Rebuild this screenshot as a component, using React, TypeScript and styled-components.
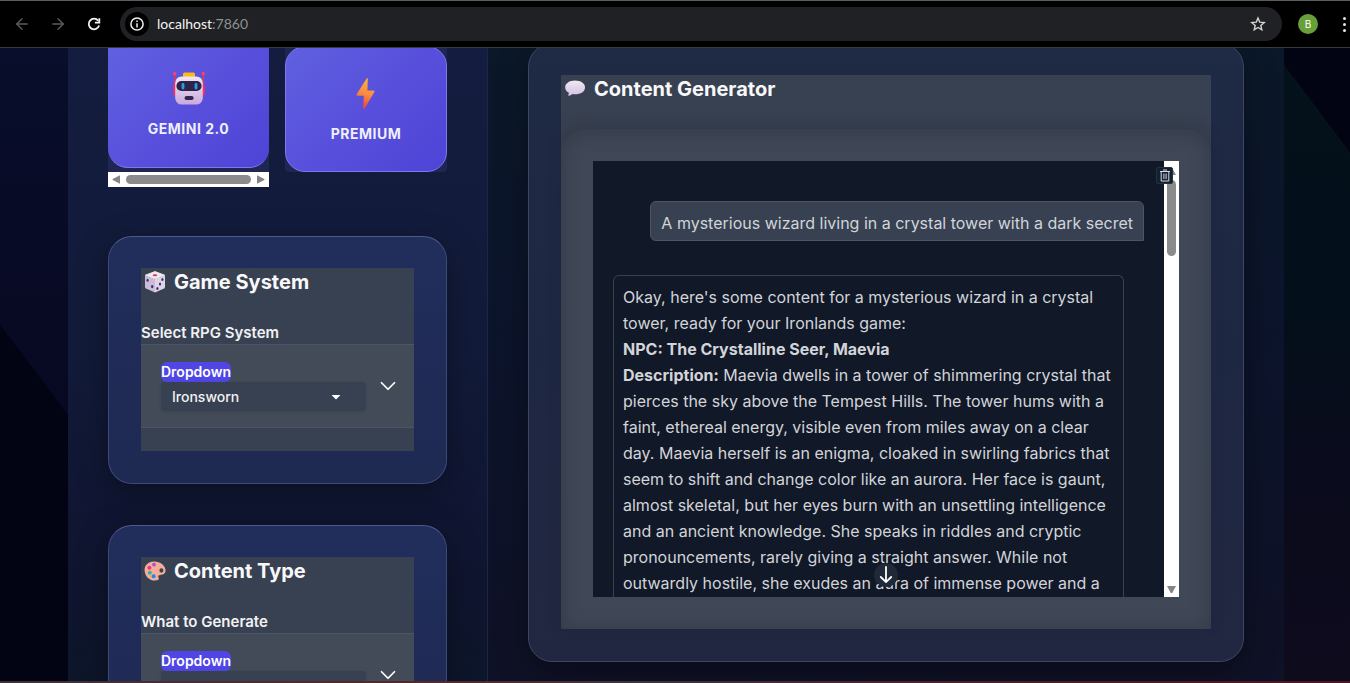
import React from 'react';
import styled, { createGlobalStyle } from 'styled-components';
import { ArrowLeft, ArrowRight, ChevronDown } from 'lucide-react';

const GlobalStyle = createGlobalStyle`
  *, *::before, *::after { box-sizing: border-box; }
  body {
    margin: 0;
    background: #020414;
    color: #f1f1f4;
    font-family: Inter, "Liberation Sans", sans-serif;
  }
  button, input, select { font: inherit; color: inherit; }
  h2, p { margin: 0; }
`;

const Window = styled.div`
  display: flex;
  flex-direction: column;
  height: 100vh;
  overflow: hidden;
`;

/* ---------- browser chrome ---------- */

const Toolbar = styled.header`
  flex: none;
  display: flex;
  align-items: center;
  height: 48px;
  padding: 0 0 0 12px;
  background: #000;
  border-top: 1px solid #5a5d5b;
  border-bottom: 1px solid #3a3a3c;
`;

const NavButton = styled.button<{ $dim?: boolean }>`
  display: flex;
  align-items: center;
  justify-content: center;
  width: 20px;
  height: 20px;
  margin-right: 16px;
  padding: 0;
  border: 0;
  background: none;
  color: ${(p) => (p.$dim ? '#5c5c5c' : '#f2f2f2')};
`;

const AddressBar = styled.div`
  flex: 1;
  display: flex;
  align-items: center;
  height: 34px;
  padding: 0 16px 0 5px;
  border-radius: 17px;
  background: #202124;
`;

const SiteInfo = styled.button`
  display: flex;
  align-items: center;
  justify-content: center;
  width: 24px;
  height: 24px;
  margin-right: 8px;
  padding: 0;
  border: 0;
  border-radius: 50%;
  background: #000;
`;

const Url = styled.a`
  flex: 1;
  font-family: Lato, "Open Sans", sans-serif;
  font-size: 14px;
  line-height: 20px;
  color: #f4f4f4;
  text-decoration: none;
`;

const Port = styled.span`
  color: #8d9095;
`;

const StarButton = styled.button`
  display: flex;
  padding: 0;
  border: 0;
  background: none;
  color: #d4d4d4;
`;

const Avatar = styled.button`
  width: 20px;
  height: 20px;
  margin: 0 20px 0 16px;
  padding: 0;
  border: 0;
  border-radius: 50%;
  background: #689f38;
  color: #fff;
  font-size: 10px;
  line-height: 20px;
`;

const MenuButton = styled.button`
  display: flex;
  flex-direction: column;
  align-items: center;
  gap: 3px;
  width: 12px;
  padding: 0;
  border: 0;
  background: none;

  i {
    width: 3px;
    height: 3px;
    border-radius: 50%;
    background: #e6e6e6;
  }
`;

/* ---------- page ---------- */

const Page = styled.div`
  flex: 1;
  min-height: 0;
  overflow: hidden;
  padding: 0 66px 0 68px;
  border-bottom: 2px solid;
  border-image: linear-gradient(90deg, #3a3238, #54282a 30%, #3c3236 48%, #4a2029 70%, #4d1420) 1;
  background:
    linear-gradient(53deg, #020414 14.7%, transparent 14.7%, transparent 95.7%, #020414 95.7%),
    linear-gradient(180deg, #04121b, #030f1b 40%, #0a0b1c 68%, #0e0b1d) right / 50% 100% no-repeat,
    linear-gradient(180deg, #080e2b, #080a24 40%, #060821 80%);
`;

const Shell = styled.div`
  display: grid;
  grid-template-columns: 420px minmax(0, 1fr);
  height: 100%;
`;

const Sidebar = styled.aside`
  padding: 0 40px;
  border-right: 1px solid #1c2747;
  background: linear-gradient(180deg, #141d3f, #111a38 50%, #101531 80%, #0d162a);
  overflow: hidden;
`;

const Main = styled.main`
  padding: 0 40px;
  background: linear-gradient(180deg, #0b1829, #0c142b 45%, #0f1126);
  overflow: hidden;
`;

const ModelRow = styled.div`
  display: grid;
  grid-template-columns: 161fr 162fr;
  column-gap: 16px;
  align-items: start;
  height: 139px;
  margin-bottom: 49px;
`;

const ModelSlot = styled.div`
  background: #1f2654;
  border-radius: 0 0 4px 4px;
`;

const ModelButton = styled.button<{ $tall?: boolean }>`
  display: flex;
  flex-direction: column;
  align-items: center;
  width: 100%;
  height: ${(p) => (p.$tall ? 126 : 120)}px;
  margin-top: ${(p) => (p.$tall ? -2 : 0)}px;
  padding: ${(p) => (p.$tall ? 28 : 22)}px 0 0;
  border: solid #7d78ee;
  border-width: ${(p) => (p.$tall ? '1px' : '0 0 1px')};
  border-radius: ${(p) => (p.$tall ? '20px' : '0 0 20px 20px')};
  background: linear-gradient(135deg, #6060e0, #5850dc 50%, #4e43d6);
  color: #efeffc;
  font-size: 14px;
  font-weight: 700;
  line-height: 20px;
  letter-spacing: 0.5px;

  svg { margin-bottom: 13px; }
`;

const HBar = styled.div`
  display: flex;
  align-items: center;
  gap: 5px;
  height: 15px;
  margin-top: 4px;
  padding: 0 4px;
  background: #fff;

  i {
    flex: 1;
    height: 9px;
    border-radius: 5px;
    background: #8b8b8b;
  }
`;

const HSlot = styled.div`
  background: #1f2654;
`;

const Card = styled.section`
  padding: 31px 32px 32px;
  border: 1px solid #3d4978;
  border-top-color: #4d5b88;
  border-radius: 24px;
  background: linear-gradient(180deg, #212d5b, #1e2a52);
  box-shadow: 0 8px 32px rgba(0, 0, 0, 0.35);
  margin-bottom: 41px;
`;

const MainCard = styled(Card)`
  margin: -5px 0 0;
  border-color: #3b4566;
  background: linear-gradient(180deg, #1f2a45, #1e2742 50%, #222741);
`;

const Panel = styled.div`
  background: #384151;
`;

const PanelTitle = styled.h2`
  display: flex;
  align-items: center;
  gap: 8px;
  padding-left: 3px;
  color: #f8f8fa;
  font-size: 20px;
  font-weight: 700;
  line-height: 28px;

  svg { flex: none; }
`;

const FieldTitle = styled.p`
  margin-top: 26px;
  font-size: 15px;
  font-weight: 600;
  line-height: 22px;
`;

const Field = styled.div`
  display: flex;
  align-items: center;
  justify-content: space-between;
  height: 84px;
  padding: 0 13px 0 20px;
  border: solid #4c5563;
  border-width: 1px 0;
  background: #434b59;
`;

const FieldBody = styled.div`
  display: flex;
  flex-direction: column;
  align-items: flex-start;
  width: 205px;
`;

const Badge = styled.label`
  border-radius: 6px;
  background: #4f46e5;
  color: #fff;
  font-size: 14px;
  font-weight: 600;
  line-height: 20px;
`;

const SelectWrap = styled.div`
  position: relative;
  width: 100%;

  svg {
    position: absolute;
    top: 13px;
    right: 25px;
    pointer-events: none;
  }
`;

const Select = styled.select`
  display: block;
  appearance: none;
  width: 100%;
  height: 29px;
  padding: 0 11px;
  border: 0;
  border-radius: 4px;
  background: #374151;
  box-shadow: 0 1px 3px rgba(0, 0, 0, 0.12);
  font-size: 14px;
  font-weight: 500;
`;

const Toggle = styled.button`
  display: flex;
  padding: 0;
  border: 0;
  background: none;
  color: #fff;
`;

const PanelEnd = styled.div`
  height: 23px;
`;

const ChatFrame = styled.div`
  margin-top: 26px;
  padding: 32px;
  border-radius: 24px 24px 0 0;
  background: #404857;
  box-shadow: inset 0 2px 20px rgba(20, 28, 36, 0.32), 0 -4px 14px rgba(30, 34, 44, 0.22);
`;

const ChatBox = styled.div`
  position: relative;
  display: flex;
  height: 436px;
  overflow: hidden;
  background: #111827;
`;

const ChatLog = styled.div`
  flex: 1;
  display: flex;
  flex-direction: column;
  padding: 40px 20px 0;
  color: #d2d4d9;
  font-size: 16px;
  line-height: 26px;
`;

const UserBubble = styled.p`
  align-self: flex-end;
  height: 40px;
  margin-bottom: 34px;
  padding: 8px 10px 0;
  border: 1px solid #4b5563;
  border-radius: 6px 6px 0 6px;
  background: #374151;
`;

const BotBubble = styled.div`
  flex: 1;
  margin-right: 20px;
  padding: 8px 9px 0;
  border: 1px solid #374151;
  border-bottom: 0;
  border-radius: 6px 6px 0 0;

  b { font-weight: 700; }
`;

const VBar = styled.div`
  display: flex;
  flex-direction: column;
  align-items: center;
  width: 15px;
  padding: 6px 0 3px;
  background: #fff;

  i {
    width: 9px;
    height: 76px;
    margin: 4px 0 auto;
    border-radius: 5px;
    background: #8b8b8b;
  }
`;

const ClearButton = styled.button`
  position: absolute;
  top: 6px;
  right: 6px;
  display: flex;
  align-items: center;
  justify-content: center;
  width: 17px;
  height: 17px;
  padding: 0;
  border: 1px solid #1f3344;
  border-radius: 2px;
  background: #14202f;
`;

const ScrollDown = styled.button`
  position: absolute;
  left: 50%;
  bottom: 10px;
  display: flex;
  align-items: center;
  justify-content: center;
  width: 24px;
  height: 24px;
  margin-left: -12px;
  padding: 0;
  border: 0;
  border-radius: 50%;
  background: #1f2937;
  color: #fff;
`;

/* ---------- drawings ---------- */

const ReloadIcon = () => (
  <svg width="14" height="14" viewBox="0 0 14 14" fill="none" stroke="currentColor" strokeWidth="1.8">
    <path d="M12.1 8.6A5.3 5.3 0 1 1 11.2 3.7" />
    <path d="M12.3 1.2V5.6H7.9" />
  </svg>
);

const StarIcon = () => (
  <svg width="16" height="16" viewBox="0 0 16 16" fill="none" stroke="currentColor" strokeWidth="1.4">
    <path d="M8 2L9.7 6.1 14.2 6.5 10.8 9.4 11.8 13.8 8 11.5 4.2 13.8 5.2 9.4 1.8 6.5 6.3 6.1Z" />
  </svg>
);

const InfoIcon = () => (
  <svg width="14" height="14" viewBox="0 0 14 14" fill="none" stroke="#f0f0f0" strokeWidth="1.5">
    <circle cx="7" cy="7" r="6.1" />
    <path d="M7 6.2V10.4M7 3.4V5" />
  </svg>
);

const TrashIcon = () => (
  <svg width="12" height="13" viewBox="0 0 12 13" fill="none" stroke="#d8dbe0" strokeWidth="1">
    <path d="M1 2.5H11M4 1H8M2.2 2.5V12H9.8V2.5M4.9 4.6V10M7.1 4.6V10" />
  </svg>
);

const DownIcon = () => (
  <svg width="14" height="18" viewBox="0 0 14 18" fill="none" stroke="currentColor" strokeWidth="1.8">
    <path d="M7 1V16M1.8 11L7 16.2 12.2 11" strokeLinecap="round" strokeLinejoin="round" />
  </svg>
);

const Triangle = ({ dir, color = '#858585' }: { dir: 'left' | 'right' | 'up' | 'down'; color?: string }) => {
  const shapes = {
    left: 'M8 0.3V8.7L0.6 5V4Z',
    right: 'M1 0.3V8.7L8.4 5V4Z',
    up: 'M0 8H9L5.2 1H3.8Z',
    down: 'M0 1H9L5.2 8H3.8Z',
  };
  return (
    <svg width="9" height="9" viewBox="0 0 9 9" fill={color}>
      <path d={shapes[dir]} />
    </svg>
  );
};

const Caret = () => (
  <svg width="10" height="5" viewBox="0 0 10 5" fill="#fff">
    <path d="M0.5 0H9.5L5 4.6Z" />
  </svg>
);

const Robot = () => (
  <svg width="34" height="36" viewBox="0 0 34 36">
    <defs>
      <linearGradient id="face" x1="0" y1="0" x2="0" y2="1">
        <stop offset="0" stopColor="#f0e6f4" />
        <stop offset="1" stopColor="#c9a9dc" />
      </linearGradient>
    </defs>
    <rect x="1.9" y="3" width="1.6" height="16" fill="#e2365f" />
    <rect x="30.5" y="3" width="1.6" height="16" fill="#e2365f" />
    <circle cx="2.7" cy="3.6" r="1.8" fill="#fb3f6c" />
    <circle cx="31.3" cy="3.6" r="1.8" fill="#fb3f6c" />
    <rect x="1" y="14" width="5" height="12" rx="2.4" fill="#e8306b" />
    <rect x="28" y="14" width="5" height="12" rx="2.4" fill="#e8306b" />
    <rect x="11" y="2.4" width="12" height="6" rx="1.6" fill="#fdb917" />
    <rect x="3.2" y="6.4" width="27.6" height="28.2" rx="6.5" fill="url(#face)" />
    <rect x="4.4" y="11" width="25.2" height="10" rx="5" fill="#2f2448" />
    <rect x="9.6" y="13" width="2.8" height="6.4" rx="1.4" fill="#1ea3e6" />
    <rect x="22.6" y="13" width="2.8" height="6.4" rx="1.4" fill="#1ea3e6" />
    <rect x="12.6" y="26" width="9" height="4" rx="1.8" fill="#36264d" />
  </svg>
);

const Bolt = () => (
  <svg width="34" height="36" viewBox="0 0 34 36">
    <defs>
      <linearGradient id="bolt" x1="0.6" y1="0" x2="0.4" y2="1">
        <stop offset="0" stopColor="#fcb52f" />
        <stop offset="0.5" stopColor="#fb8b41" />
        <stop offset="1" stopColor="#ee4136" />
      </linearGradient>
    </defs>
    <path
      d="M17.6 3.6Q18.6 2.4 18.8 4L18.4 15.4H24.6Q26.2 15.6 25.2 17.2L15.6 33.4Q14.2 34.6 14.2 33L14.8 20.8H8.6Q6.8 20.6 7.8 19Z"
      fill="url(#bolt)"
    />
  </svg>
);

const Die = () => (
  <svg width="22" height="22" viewBox="0 0 22 22">
    <path d="M11 0.6L20.6 4.2 11 8 1.4 4.2Z" fill="#efe9f1" stroke="#efe9f1" strokeLinejoin="round" />
    <path d="M1 4.6L11 8.2V21.4L2 17.6Q1 17 1 16Z" fill="#c9bcd6" />
    <path d="M21 4.6L11 8.2V21.4L20 17.6Q21 17 21 16Z" fill="#ddd4e4" />
    <ellipse cx="11" cy="4.2" rx="2.3" ry="1" fill="#e2304f" />
    <g fill="#432a78">
      <ellipse cx="3.6" cy="9.2" rx="1.1" ry="1.5" />
      <ellipse cx="8.2" cy="15.6" rx="1.2" ry="1.6" />
      <ellipse cx="18.4" cy="8.6" rx="1.1" ry="1.5" />
      <ellipse cx="16" cy="13" rx="1.1" ry="1.5" />
      <ellipse cx="13.4" cy="17.4" rx="1.1" ry="1.5" />
    </g>
  </svg>
);

const Palette = () => (
  <svg width="22" height="22" viewBox="0 0 22 22">
    <path
      fillRule="evenodd"
      d="M9.5 1.4C4 1.6 0.4 5.6 0.6 10.4 0.9 16 5.2 20.4 10.6 20.6 13.4 20.7 15 19.9 14.9 18.6 14.8 17.4 13.6 16.6 14.6 15.6 15.8 14.6 21.6 15.6 21.6 10.6 21.4 5 16 1.2 9.5 1.4ZM17.4 8.2A2 2.2 0 1 1 17.4 12.6 2 2.2 0 1 1 17.4 8.2Z"
      fill="#f4ad98"
    />
    <circle cx="10" cy="4.6" r="1.9" fill="#a94fd8" />
    <circle cx="5.4" cy="7.8" r="2" fill="#f0338f" />
    <circle cx="5.8" cy="12.8" r="2" fill="#28b99c" />
    <circle cx="9.6" cy="16.2" r="2" fill="#1f87ee" />
  </svg>
);

const Speech = () => (
  <svg width="22" height="22" viewBox="0 0 22 22">
    <defs>
      <linearGradient id="speech" x1="0" y1="0" x2="0" y2="1">
        <stop offset="0" stopColor="#efe8f3" />
        <stop offset="1" stopColor="#d3c1e2" />
      </linearGradient>
    </defs>
    <path
      d="M11 2.6C16.8 2.6 21 5.4 21 9.4S16.8 16.2 11 16.2Q9.6 16.2 8.4 16 7 17.8 4.6 17.8 3.6 17.6 4.4 16.8 5 16 4.8 14.8 1.2 12.8 1.2 9.4C1.2 5.4 5.4 2.6 11 2.6Z"
      fill="url(#speech)"
    />
  </svg>
);

/* ---------- parts ---------- */

type SelectCardProps = {
  id: string;
  icon: React.ReactNode;
  title: string;
  label: string;
  value: string;
};

const SelectCard = ({ id, icon, title, label, value }: SelectCardProps) => (
  <Card>
    <Panel>
      <PanelTitle>
        {icon}
        {title}
      </PanelTitle>
      <FieldTitle>{label}</FieldTitle>
      <Field>
        <FieldBody>
          <Badge htmlFor={id}>Dropdown</Badge>
          <SelectWrap>
            <Select id={id} defaultValue={value}>
              <option>{value}</option>
            </Select>
            <Caret />
          </SelectWrap>
        </FieldBody>
        <Toggle aria-label="Expand">
          <ChevronDown size={26} strokeWidth={1.6} />
        </Toggle>
      </Field>
      <PanelEnd />
    </Panel>
  </Card>
);

export default function App() {
  return (
    <Window>
      <GlobalStyle />
      <Toolbar>
        <NavButton $dim aria-label="Back">
          <ArrowLeft size={18} strokeWidth={1.8} />
        </NavButton>
        <NavButton $dim aria-label="Forward">
          <ArrowRight size={18} strokeWidth={1.8} />
        </NavButton>
        <NavButton aria-label="Reload">
          <ReloadIcon />
        </NavButton>
        <AddressBar>
          <SiteInfo aria-label="Site information">
            <InfoIcon />
          </SiteInfo>
          <Url href="#">
            localhost<Port>:7860</Port>
          </Url>
          <StarButton aria-label="Bookmark">
            <StarIcon />
          </StarButton>
        </AddressBar>
        <Avatar>B</Avatar>
        <MenuButton aria-label="Menu">
          <i />
          <i />
          <i />
        </MenuButton>
      </Toolbar>

      <Page>
        <Shell>
          <Sidebar>
            <ModelRow>
              <HSlot>
                <ModelButton>
                  <Robot />
                  GEMINI 2.0
                </ModelButton>
                <HBar>
                  <Triangle dir="left" />
                  <i />
                  <Triangle dir="right" />
                </HBar>
              </HSlot>
              <ModelSlot>
                <ModelButton $tall>
                  <Bolt />
                  PREMIUM
                </ModelButton>
              </ModelSlot>
            </ModelRow>
            <SelectCard
              id="system"
              icon={<Die />}
              title="Game System"
              label="Select RPG System"
              value="Ironsworn"
            />
            <SelectCard id="type" icon={<Palette />} title="Content Type" label="What to Generate" value="" />
          </Sidebar>

          <Main>
            <MainCard>
              <Panel>
                <PanelTitle>
                  <Speech />
                  Content Generator
                </PanelTitle>
                <ChatFrame>
                  <ChatBox>
                    <ChatLog>
                      <UserBubble>A mysterious wizard living in a crystal tower with a dark secret</UserBubble>
                      <BotBubble>
                        <p>
                          Okay, here's some content for a mysterious wizard in a crystal tower, ready for your
                          Ironlands game:
                        </p>
                        <p>
                          <b>NPC: The Crystalline Seer, Maevia</b>
                        </p>
                        <p>
                          <b>Description:</b> Maevia dwells in a tower of shimmering crystal that pierces the sky
                          above the Tempest Hills. The tower hums with a faint, ethereal energy, visible even from
                          miles away on a clear day. Maevia herself is an enigma, cloaked in swirling fabrics that
                          seem to shift and change color like an aurora. Her face is gaunt, almost skeletal, but her
                          eyes burn with an unsettling intelligence and an ancient knowledge. She speaks in riddles
                          and cryptic pronouncements, rarely giving a straight answer. While not outwardly hostile,
                          she exudes an aura of immense power and a
                        </p>
                      </BotBubble>
                    </ChatLog>
                    <VBar>
                      <Triangle dir="up" />
                      <i />
                      <Triangle dir="down" />
                    </VBar>
                    <ClearButton aria-label="Clear">
                      <TrashIcon />
                    </ClearButton>
                    <ScrollDown aria-label="Scroll to bottom">
                      <DownIcon />
                    </ScrollDown>
                  </ChatBox>
                </ChatFrame>
              </Panel>
            </MainCard>
          </Main>
        </Shell>
      </Page>
    </Window>
  );
}
